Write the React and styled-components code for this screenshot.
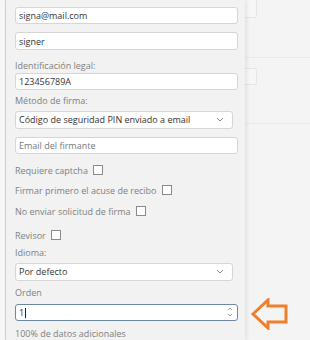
import styled, { createGlobalStyle } from "styled-components";

const GlobalStyle = createGlobalStyle`
  html, body {
    margin: 0;
    padding: 0;
    background: #f4f4f4;
    overflow: hidden;
  }
  body {
    font-family: "Open Sans", "Noto Sans", sans-serif;
  }
`;

const CHECKS = [
  { label: "Requiere captcha", top: 10 },
  { label: "Firmar primero el acuse de recibo", top: 8 },
  { label: "No enviar solicitud de firma", top: 9 },
  { label: "Revisor", top: 12 },
];

const Chevron = () => (
  <svg width="8" height="5" viewBox="0 0 8 5">
    <path d="M1 1 L4 4 L7 1" fill="none" stroke="#888" strokeWidth="1" />
  </svg>
);

const Spinner = () => (
  <svg width="6" height="12" viewBox="0 0 6 12">
    <path d="M1 4 L3 2 L5 4" fill="none" stroke="#999" strokeWidth="0.9" />
    <path d="M1 8 L3 10 L5 8" fill="none" stroke="#999" strokeWidth="0.9" />
  </svg>
);

const Arrow = () => (
  <svg width="38" height="32" viewBox="0 0 38 32">
    <path
      d="M2 16 L17 2 L17 8 L35 8 L35 24 L17 24 L17 30 Z"
      fill="none"
      stroke="#f07f2d"
      strokeWidth="3"
      strokeLinejoin="miter"
    />
  </svg>
);

export default function App() {
  return (
    <Page>
      <GlobalStyle />
      <Gutter />
      <Panel>
        <TextInput $top={7}>signa@mail.com</TextInput>
        <TextInput $top={8}>signer</TextInput>

        <Label $top={10}>Identificación legal:</Label>
        <TextInput $top={1}>123456789A</TextInput>

        <Label $top={5}>Método de firma:</Label>
        <Select $top={4}>
          <span>Código de seguridad PIN enviado a email</span>
          <Chevron />
        </Select>

        <TextInput $top={8} $placeholder>
          Email del firmante
        </TextInput>

        {CHECKS.map(({ label, top }) => (
          <CheckRow key={label} $top={top}>
            <span>{label}</span>
            <Box />
          </CheckRow>
        ))}

        <Label $top={6}>Idioma:</Label>
        <Select $top={4}>
          <span>Por defecto</span>
          <Chevron />
        </Select>

        <Label $top={6}>Orden</Label>
        <NumberInput $top={5}>
          <span>
            1<Caret />
          </span>
          <Spinner />
        </NumberInput>

        <Label $top={7}>100% de datos adicionales</Label>
      </Panel>
      <Backdrop>
        <GhostBox $top={-3} $height={21} />
        <Rule $top={39} />
        <GhostBox $top={10} $height={17} />
        <Rule $top={38} />
        <ArrowSpot>
          <Arrow />
        </ArrowSpot>
      </Backdrop>
    </Page>
  );
}

const Page = styled.div`
  display: flex;
  width: 310px;
  height: 340px;
  overflow: hidden;
`;

const Gutter = styled.div`
  width: 5px;
  flex-shrink: 0;
  background: #f6f6f6;
`;

const Panel = styled.div`
  width: 240px;
  flex-shrink: 0;
  display: flex;
  flex-direction: column;
  align-items: flex-start;
  padding-left: 9px;
  box-sizing: border-box;
  background: #f2f2f2;
  border-left: 1px solid #cfcfcf;
  box-shadow: 2px 0 4px rgba(0, 0, 0, 0.08);
  position: relative;
  z-index: 1;
`;

const Label = styled.div`
  margin-top: ${(p) => p.$top}px;
  height: 12px;
  line-height: 12px;
  font-size: 9px;
  color: #808080;
  white-space: nowrap;
`;

const Field = styled.div`
  margin-top: ${(p) => p.$top}px;
  height: 19px;
  box-sizing: border-box;
  border: 1px solid #d6d6d6;
  border-radius: 3px;
  background: #fff;
  display: flex;
  align-items: center;
  justify-content: space-between;
  padding: 0 8px 0 3px;
  font-size: 9px;
  color: #333;
  white-space: nowrap;
`;

const TextInput = styled(Field)`
  width: 223px;
  color: ${(p) => (p.$placeholder ? "#777" : "#333")};
`;

const Select = styled(Field)`
  width: 218px;
`;

const NumberInput = styled(Field)`
  width: 223px;
  border-color: #6d88a3;
  padding-right: 4px;
`;

const Caret = styled.span`
  display: inline-block;
  width: 1px;
  height: 10px;
  margin-left: 1px;
  background: #222;
  vertical-align: middle;
`;

const CheckRow = styled.div`
  margin-top: ${(p) => p.$top}px;
  height: 12px;
  display: flex;
  align-items: center;
  gap: 5px;
  font-size: 9px;
  color: #808080;
  white-space: nowrap;
`;

const Box = styled.span`
  width: 8px;
  height: 8px;
  border: 1px solid #8a8a8a;
  background: #fff;
`;

const Backdrop = styled.div`
  flex: 1;
  display: flex;
  flex-direction: column;
  background: #f4f4f4;
  position: relative;
`;

const GhostBox = styled.div`
  margin-top: ${(p) => p.$top}px;
  width: 12px;
  height: ${(p) => p.$height}px;
  box-sizing: border-box;
  border: 1px solid #e6e6e6;
  border-left: none;
  border-radius: 0 3px 3px 0;
  background: #f7f7f7;
`;

const Rule = styled.div`
  margin-top: ${(p) => p.$top}px;
  height: 1px;
  background: #e9e9e9;
`;

const ArrowSpot = styled.div`
  position: absolute;
  left: 6px;
  top: 298px;
`;
